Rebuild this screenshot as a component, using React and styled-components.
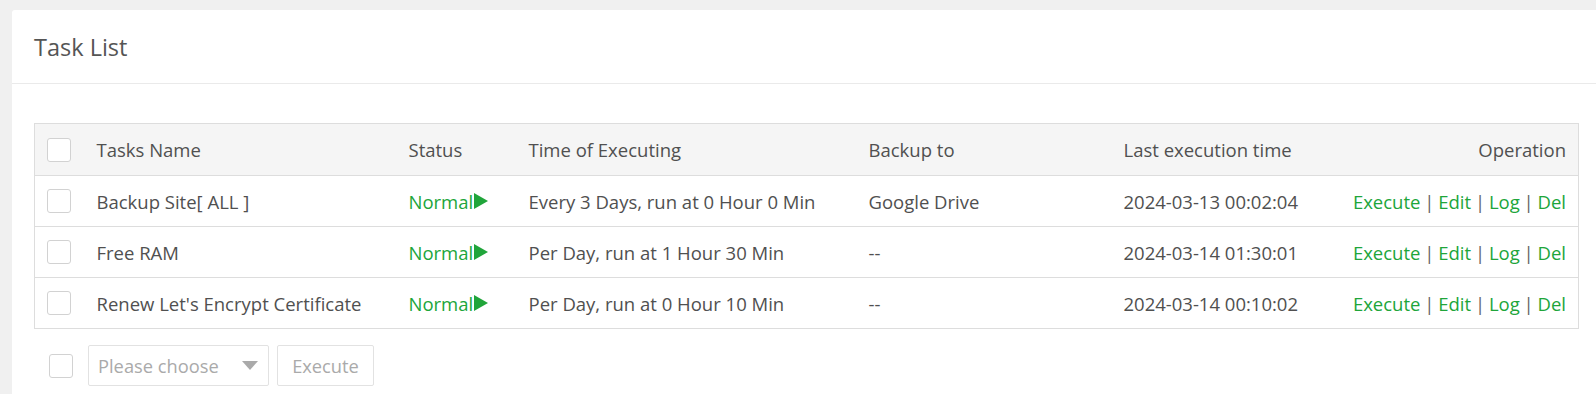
import React from "react";
import styled, { createGlobalStyle } from "styled-components";

const Global = createGlobalStyle`
  html, body { margin: 0; padding: 0; background: #f0f0f0; }
  body { font-family: "Open Sans", "Noto Sans", sans-serif; color: #555; }
`;

const Page = styled.div`
  padding: 10px 0 0 12px;
  height: 394px;
  box-sizing: border-box;
  overflow: hidden;
`;

const Card = styled.div`
  background: #fff;
  border-radius: 3px 0 0 0;
  min-height: 420px;
`;

const CardHeader = styled.div`
  height: 73px;
  border-bottom: 1px solid #eaeaea;
  display: flex;
  align-items: center;
  padding-left: 22px;
  font-size: 23.5px;
  color: #555;
`;

const CardBody = styled.div`
  padding: 39px 6px 0 22px;
`;

const Table = styled.table`
  width: 1544px;
  table-layout: fixed;
  border-collapse: collapse;
  border: 1px solid #ddd;
  font-size: 18.5px;
  color: #505050;
`;

const HeadRow = styled.tr`
  background: #f5f5f5;
  height: 52px;
`;

const Row = styled.tr`
  height: 51px;
  border-top: 1px solid #ddd;
`;

const Th = styled.th`
  font-weight: normal;
  text-align: ${(p) => (p.$right ? "right" : "left")};
  padding: 0 ${(p) => (p.$right ? "12px" : "0")} 0 ${(p) => (p.$first ? "12px" : "0")};
  white-space: nowrap;
`;

const Td = styled.td`
  text-align: ${(p) => (p.$right ? "right" : "left")};
  padding: 0 ${(p) => (p.$right ? "12px" : "0")} 0 ${(p) => (p.$first ? "12px" : "0")};
  white-space: nowrap;
`;

const Check = styled.span`
  display: block;
  width: 22px;
  height: 22px;
  border: 1px solid #d2d2d2;
  border-radius: 3px;
  background: #fff;
`;

const Status = styled.span`
  color: #20a53a;
  display: inline-flex;
  align-items: center;
`;

const Tri = styled.span`
  display: inline-block;
  width: 0;
  height: 0;
  border-top: 8px solid transparent;
  border-bottom: 8px solid transparent;
  border-left: 14px solid #20a53a;
  margin-left: 1px;
`;

const Link = styled.a`
  color: #20a53a;
  text-decoration: none;
`;

const Sep = styled.span`
  color: #666;
  margin: 0 -1px;
`;

const Footer = styled.div`
  display: flex;
  align-items: center;
  margin-top: 16px;
  padding-left: 15px;
  gap: 8px;
`;

const FootCheck = styled(Check)`
  margin-right: 7px;
`;

const Select = styled.div`
  width: 181px;
  height: 41px;
  box-sizing: border-box;
  border: 1px solid #e2e2e2;
  border-radius: 2px;
  display: flex;
  align-items: center;
  justify-content: space-between;
  padding: 0 10px 0 9px;
  font-size: 18.3px;
  color: #aaa;
`;

const Caret = styled.span`
  width: 0;
  height: 0;
  border-left: 8px solid transparent;
  border-right: 8px solid transparent;
  border-top: 9px solid #aaa;
`;

const Button = styled.button`
  width: 97px;
  height: 41px;
  border: 1px solid #e2e2e2;
  border-radius: 2px;
  background: #fff;
  font-family: inherit;
  font-size: 18.3px;
  color: #aaa;
  padding: 0;
`;

const cols = [62, 312, 120, 340, 255, 220, 235];

const rows = [
  ["Backup Site[ ALL ]", "Every 3 Days, run at 0 Hour 0 Min", "Google Drive", "2024-03-13 00:02:04"],
  ["Free RAM", "Per Day, run at 1 Hour 30 Min", "--", "2024-03-14 01:30:01"],
  ["Renew Let's Encrypt Certificate", "Per Day, run at 0 Hour 10 Min", "--", "2024-03-14 00:10:02"],
];

const Ops = () => (
  <>
    <Link>Execute</Link>
    <Sep> | </Sep>
    <Link>Edit</Link>
    <Sep> | </Sep>
    <Link>Log</Link>
    <Sep> | </Sep>
    <Link>Del</Link>
  </>
);

export default function App() {
  return (
    <>
      <Global />
      <Page>
        <Card>
          <CardHeader>Task List</CardHeader>
          <CardBody>
            <Table>
              <colgroup>
                {cols.map((w, i) => (
                  <col key={i} style={{ width: w }} />
                ))}
              </colgroup>
              <thead>
                <HeadRow>
                  <Th $first><Check /></Th>
                  <Th>Tasks Name</Th>
                  <Th>Status</Th>
                  <Th>Time of Executing</Th>
                  <Th>Backup to</Th>
                  <Th>Last execution time</Th>
                  <Th $right>Operation</Th>
                </HeadRow>
              </thead>
              <tbody>
                {rows.map((r, i) => (
                  <Row key={i}>
                    <Td $first><Check /></Td>
                    <Td>{r[0]}</Td>
                    <Td>
                      <Status>Normal<Tri /></Status>
                    </Td>
                    <Td>{r[1]}</Td>
                    <Td>{r[2]}</Td>
                    <Td>{r[3]}</Td>
                    <Td $right><Ops /></Td>
                  </Row>
                ))}
              </tbody>
            </Table>
            <Footer>
              <FootCheck />
              <Select>
                <span>Please choose</span>
                <Caret />
              </Select>
              <Button>Execute</Button>
            </Footer>
          </CardBody>
        </Card>
      </Page>
    </>
  );
}
